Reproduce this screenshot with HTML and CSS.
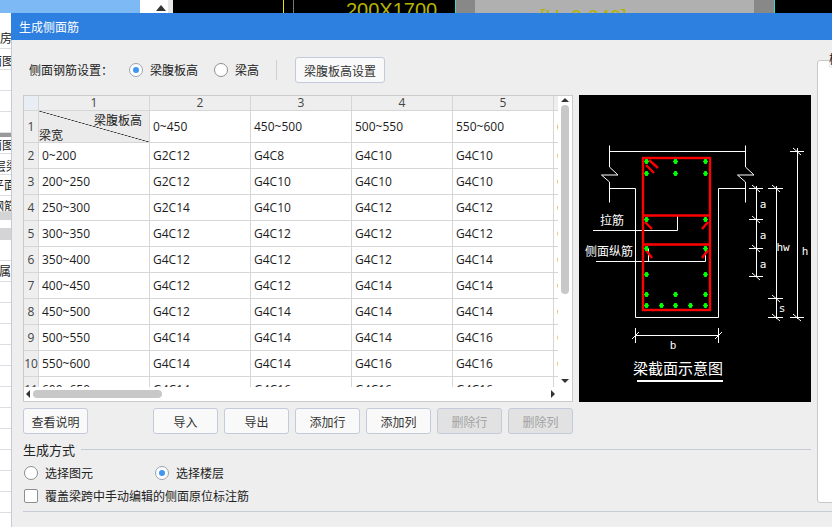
FILE: index.html
```html
<!DOCTYPE html>
<html lang="zh">
<head>
<meta charset="utf-8">
<title>生成侧面筋</title>
<link rel="stylesheet" href="styles.css">
</head>
<body>
<div class="app">
  <aside class="sidebar">
    <div class="side-top"><div class="side-tab"></div><div class="side-arrow"></div></div>
    <div class="side-row h15"></div>
    <div class="side-row">机房</div>
    <div class="side-row low ind10">面图</div>
    <div class="side-row"></div>
    <div class="side-row"></div>
    <div class="side-row"></div>
    <div class="side-band"></div>
    <div class="side-row h17 ind10">面图</div>
    <div class="side-row low ind6">层梁</div>
    <div class="side-row ind8">平面</div>
    <div class="side-row h16 ind8">钢筋</div>
    <div class="side-grey h8"></div>
    <div class="side-row h8"></div>
    <div class="side-grey h12"></div>
    <div class="side-row">&nbsp;</div>
    <div class="side-row ind1">属性</div>
    <div class="side-row"></div>
    <div class="side-row"></div>
    <div class="side-row"></div>
    <div class="side-row"></div>
    <div class="side-row"></div>
    <div class="side-row"></div>
    <div class="side-row"></div>
    <div class="side-row"></div>
    <div class="side-row"></div>
    <div class="side-row"></div>
    <div class="side-row"></div>
  </aside>
  <div class="side-gap"></div>
  <main class="cad">
    <svg class="cad-svg" width="659" height="14" viewBox="173 0 659 14">
      <line x1="283.5" y1="0" x2="283.5" y2="14" stroke="#e6e600"/>
      <line x1="293.5" y1="0" x2="293.5" y2="14" stroke="#777"/>
      <text x="346" y="17" class="cad-label">200X1700</text>
      <rect x="455" y="0" width="320" height="14" fill="#888"/>
      <rect x="475" y="0" width="279" height="14" fill="#b0b0b0"/>
      <rect x="455" y="0" width="1" height="14" fill="#35d6d6"/>
      <rect x="774" y="0" width="1" height="14" fill="#35d6d6"/>
      <text x="540" y="24" class="cad-label">[H: 0.040]</text>
    </svg>
  </main>

  <section class="dialog">
    <header class="dialog-title">生成侧面筋</header>
    <div class="dialog-body">
      <div class="settings">
        <span class="settings-label">侧面钢筋设置<span class="colon">：</span></span>
        <label class="option opt-web"><span class="radio checked"></span>梁腹板高</label>
        <label class="option"><span class="radio"></span>梁高</label>
        <span class="vsep"></span>
        <button class="btn btn-wide">梁腹板高设置</button>
      </div>

      <div class="main-row">
        <div class="grid-box">
          <div class="grid-view">
            <table class="grid">
              <colgroup>
                <col class="c-num"><col class="c-first"><col class="c-std"><col class="c-std"><col class="c-std"><col class="c-std"><col class="c-std">
              </colgroup>
              <thead>
                <tr><th class="corner"></th><th>1</th><th>2</th><th>3</th><th>4</th><th>5</th><th>6</th></tr>
              </thead>
              <tbody>
                <tr class="row-top"><th>1</th>
                  <td class="diag"><div class="diag-in"><span class="diag-a">梁腹板高</span><span class="diag-b">梁宽</span></div></td>
                  <td>0~450</td><td>450~500</td><td>500~550</td><td>550~600</td><td>600~650</td></tr>
                <tr><th>2</th><td>0~200</td><td>G2C12</td><td>G4C8</td><td>G4C10</td><td>G4C10</td><td>G4C10</td></tr>
                <tr><th>3</th><td>200~250</td><td>G2C12</td><td>G4C10</td><td>G4C10</td><td>G4C10</td><td>G4C10</td></tr>
                <tr><th>4</th><td>250~300</td><td>G2C14</td><td>G4C10</td><td>G4C12</td><td>G4C12</td><td>G4C12</td></tr>
                <tr><th>5</th><td>300~350</td><td>G4C12</td><td>G4C12</td><td>G4C12</td><td>G4C12</td><td>G4C12</td></tr>
                <tr><th>6</th><td>350~400</td><td>G4C12</td><td>G4C12</td><td>G4C12</td><td>G4C14</td><td>G4C14</td></tr>
                <tr><th>7</th><td>400~450</td><td>G4C12</td><td>G4C12</td><td>G4C14</td><td>G4C14</td><td>G4C14</td></tr>
                <tr><th>8</th><td>450~500</td><td>G4C12</td><td>G4C14</td><td>G4C14</td><td>G4C14</td><td>G4C14</td></tr>
                <tr><th>9</th><td>500~550</td><td>G4C14</td><td>G4C14</td><td>G4C14</td><td>G4C16</td><td>G4C16</td></tr>
                <tr><th>10</th><td>550~600</td><td>G4C14</td><td>G4C14</td><td>G4C16</td><td>G4C16</td><td>G4C16</td></tr>
                <tr><th>11</th><td>600~650</td><td>G4C14</td><td>G4C16</td><td>G4C16</td><td>G4C16</td><td>G4C16</td></tr>
              </tbody>
            </table>
          </div>
          <div class="vbar"><span class="arr arr-up"></span><span class="vthumb"></span><span class="arr arr-down"></span></div>
          <div class="hbar"><span class="arr arr-left"></span><span class="hthumb"></span><span class="arr arr-right"></span></div>
        </div>

        <figure class="section-fig">
          <svg width="232" height="307" viewBox="0 0 232 307">
            <defs>
              <path id="dot" d="M-2.5 0H2.5M0 -2.5V2.5M-1.5 -1.5H1.5M-1.5 1.5H1.5"/>
            </defs>
            <g class="w">
              <path d="M30.5 50.5V72L39 80H22.5L30.5 87V107.5"/>
              <path d="M166.5 50.5V72L175 80H158.5L166.5 87V107.5"/>
              <path d="M30.5 56.5H166.5"/>
              <path d="M30.5 93.5H56.5V222.5H139.5V93.5H166.5"/>
              <path d="M14 135.5H98.5V121"/>
              <path d="M17 166.5H126.5V154M69.5 166.5V154"/>
              <path d="M177.5 91V182"/>
              <path d="M170 93.5H184M170 124.5H184M170 153.5H184M170 181.5H184"/>
              <path d="M197.5 91V224"/>
              <path d="M189 93.5H204M189 203.5H204M189 222.5H204"/>
              <path d="M218.5 53V224"/>
              <path d="M211 56.5H225M211 222.5H225"/>
              <path d="M56.5 240.5H139.5M56.5 233V248M139.5 233V248"/>
              <path d="M173 90L181 97M173 121L181 128M173 150L181 157M173 178L181 185M193 90L201 97M193 200L201 207M193 219L201 226M214 53L222 60M214 219L222 226M53 244L60 237M136 244L143 237"/>
            </g>
            <g class="r">
              <rect x="64" y="63" width="67" height="152"/>
              <path d="M64 120.5H131M64 149.5H131"/>
              <path d="M70 65L79 73M67 70L75 78M66 127L73 134M129 127L123 134M67 155L73 163M129 155L123 163"/>
            </g>
            <g class="g">
              <use href="#dot" x="67.5" y="66.5"/><use href="#dot" x="96.5" y="66.5"/><use href="#dot" x="126.5" y="66.5"/>
              <use href="#dot" x="67.5" y="78.5"/><use href="#dot" x="96.5" y="78.5"/><use href="#dot" x="126.5" y="78.5"/>
              <use href="#dot" x="67.5" y="124.5"/><use href="#dot" x="126.5" y="124.5"/>
              <use href="#dot" x="67.5" y="153.5"/><use href="#dot" x="126.5" y="153.5"/>
              <use href="#dot" x="67.5" y="179.5"/><use href="#dot" x="126.5" y="179.5"/>
              <use href="#dot" x="67.5" y="199.5"/><use href="#dot" x="96.5" y="199.5"/><use href="#dot" x="126.5" y="199.5"/>
              <use href="#dot" x="67.5" y="210.5"/><use href="#dot" x="82.5" y="210.5"/><use href="#dot" x="96.5" y="210.5"/><use href="#dot" x="111.5" y="210.5"/><use href="#dot" x="126.5" y="210.5"/>
            </g>
            <text x="21" y="130" class="t12">拉筋</text>
            <text x="6" y="161" class="t12">侧面纵筋</text>
            <text x="184" y="113" class="t10 mid">a</text>
            <text x="184" y="144" class="t10 mid">a</text>
            <text x="184" y="173" class="t10 mid">a</text>
            <text x="204" y="156" class="t10 mid">hw</text>
            <text x="226" y="160" class="t10 mid">h</text>
            <text x="203" y="217" class="t10 mid">s</text>
            <text x="94" y="254" class="t10 mid">b</text>
            <text x="54" y="279" class="t15">梁截面示意图</text>
            <path class="ul" d="M58 286H144"/>
          </svg>
        </figure>
      </div>

      <div class="actions">
        <button class="btn">查看说明</button>
        <div class="actions-right">
          <button class="btn">导入</button>
          <button class="btn">导出</button>
          <button class="btn">添加行</button>
          <button class="btn">添加列</button>
          <button class="btn disabled">删除行</button>
          <button class="btn disabled">删除列</button>
        </div>
      </div>

      <div class="group-head"><span>生成方式</span><i></i></div>
      <div class="mode-row">
        <label class="option mode-a"><span class="radio"></span>选择图元</label>
        <label class="option"><span class="radio checked"></span>选择楼层</label>
      </div>
      <label class="option check-row"><span class="check"></span>覆盖梁跨中手动编辑的侧面原位标注筋</label>
      <div class="bottom-line"></div>
    </div>
    <div class="side-panel"><span class="legend">楼层</span></div>
  </section>
</div>
</body>
</html>
```

FILE: styles.css
```css
* { box-sizing: border-box; }
html, body { margin: 0; padding: 0; }
body {
  width: 832px; height: 527px; overflow: hidden; background: #fff;
  font: 12px/16px "Open Sans", "Noto Sans CJK SC", sans-serif; color: #222;
}
.app { position: relative; width: 832px; height: 527px; display: flex; overflow: hidden; }

/* backdrop */
.sidebar { width: 168px; background: #fff; font-family: "Noto Sans CJK SC", sans-serif; font-size: 12px; }
.side-top { display: flex; height: 13px; }
.side-tab { width: 140px; background: #7db9f4; }
.side-arrow { width: 0; height: 0; margin: 5px 0 0 16px; border: 5px solid transparent; border-top: 0; border-bottom: 6px solid #333; }
.side-row { height: 21px; border-bottom: 1px solid #ddd; line-height: 20px; text-indent: -12px; overflow: hidden; }
.side-row.low { line-height: 24px; }
.side-row.ind1 { text-indent: -1px; }
.side-row.ind6 { text-indent: -6px; }
.side-row.ind8 { text-indent: -8px; }
.side-row.ind10 { text-indent: -10px; }
.side-row.h15 { height: 15px; border: 0; }
.side-row.h17 { height: 17px; line-height: 16px; }
.side-row.h16 { height: 16px; }
.side-row.h8 { height: 8px; border: 0; }
.side-band { height: 4px; background: #9a9a9a; }
.side-grey { background: #d4d4d4; }
.side-grey.h8 { height: 8px; }
.side-grey.h12 { height: 12px; }
.side-gap { width: 5px; background: #e8e8e8; }
.cad { flex: 1; background: #000; }
.cad-svg { display: block; }
.cad-label { font: 20px "Liberation Sans", sans-serif; fill: #b4b400; }

/* dialog */
.dialog {
  position: absolute; left: 11px; top: 13px; right: 0; bottom: 0;
  background: #eee; border-left: 1px solid #c4cbd6;
}
.dialog-title {
  height: 27px; margin-left: -1px; background: #2d7fe0; color: #fff;
  padding-left: 8px; line-height: 27px; font-family: "Noto Sans CJK SC", sans-serif;
}
.dialog-body { padding: 17px 0 0 11px; font-family: "Noto Sans CJK SC", sans-serif; }

.settings { display: flex; align-items: center; height: 26px; padding-left: 6px; }
.settings-label { width: 100px; }
.colon { font-family: "Noto Sans CJK TC", sans-serif; }
.option { display: flex; align-items: center; }
.opt-web { width: 85px; }
.radio {
  width: 14px; height: 14px; border-radius: 50%; background: #fff; border: 1px solid #8f8f8f;
  margin-right: 7px; display: flex; align-items: center; justify-content: center;
}
.radio.checked { background: #fff; border-color: #9aa3ad; }
.radio.checked::after { content: ""; width: 6px; height: 6px; border-radius: 50%; background: #3f95f2; }
.vsep { width: 1px; height: 20px; background: #cfcfcf; margin: 0 18px 0 17px; }

.btn {
  width: 65px; height: 26px; padding: 0; background: #f9f9f9; color: #333;
  border: 1px solid #c3cbda; border-radius: 3px;
  font: 12px "Noto Sans CJK SC", sans-serif;
}
.btn-wide { width: 90px; }
.btn.disabled { background: #e2e2e2; color: #a3a3a3; }

.main-row { display: flex; gap: 6px; margin-top: 12px; }
.grid-box {
  position: relative; width: 550px; height: 307px; background: #fff;
  border: 1px solid #cacaca;
}
.grid-view { width: 534px; height: 291px; overflow: hidden; }
.grid {
  width: 616px; table-layout: fixed; border-collapse: separate; border-spacing: 0;
  font-family: "Open Sans", "Noto Sans CJK SC", sans-serif;
}
.c-num { width: 15px; }
.c-first { width: 111px; }
.c-std { width: 101px; }
.grid th, .grid td {
  border-right: 1px solid #d6d6d6; border-bottom: 1px solid #d6d6d6;
  height: 26px; padding: 0; font-weight: 400; white-space: nowrap; overflow: hidden;
}
.grid td { padding-left: 3px; background: #fff; color: #1c1c1c; }
.grid tbody th { background: #eee; text-align: center; color: #444; font-size: 12px; padding: 0; }
.grid thead th { height: 15px; background: #eee; color: #444; text-align: center; line-height: 14px; }
.grid thead .corner { background: #e9eef4; }
.grid .row-top td, .grid .row-top th { height: 32px; }
.grid td.diag {
  padding: 0;
  background: linear-gradient(to top right, #ebebeb calc(50% - .6px), #222 50%, #ebebeb calc(50% + .6px));
}
.diag-in { display: flex; flex-direction: column; height: 31px; font-family: "Noto Sans CJK SC", sans-serif; line-height: 14px; }
.diag-a { align-self: flex-end; margin: 2px 7px 0 0; }
.diag-b { margin: 1px 0 0 0; }

.vbar { position: absolute; right: 0; top: 0; width: 14px; height: 291px; }
.vthumb { position: absolute; left: 3px; top: 9px; width: 8px; height: 189px; background: #c8c8c8; border-radius: 4px; }
.hbar { position: absolute; left: 0; top: 291px; width: 534px; height: 14px; }
.hthumb { position: absolute; left: 9px; top: 3px; width: 129px; height: 8px; background: #c8c8c8; border-radius: 4px; }
.arr { position: absolute; width: 0; height: 0; border: 4px solid transparent; }
.arr-up { left: 3px; top: 2px; border-top: 0; border-bottom: 4px solid #333; }
.arr-down { left: 3px; top: 283px; border-bottom: 0; border-top: 4px solid #333; }
.arr-left { left: 2px; top: 3px; border-left: 0; border-right: 4px solid #333; }
.arr-right { left: 527px; top: 3px; border-right: 0; border-left: 4px solid #333; }

.section-fig { margin: 0; width: 232px; height: 307px; background: #000; }
.section-fig svg { display: block; }
.w path { fill: none; stroke: #fff; stroke-width: 1; }
.r rect, .r path { fill: none; stroke: #f00; stroke-width: 2.4; }
.g use { fill: none; stroke: #0f0; stroke-width: 1.5; }
.t12 { font: 12px "Noto Sans CJK SC", sans-serif; fill: #fff; }
.t10 { font: 11px "DejaVu Sans Mono", monospace; fill: #fff; }
.mid { text-anchor: middle; }
.t15 { font: 15px "Noto Sans CJK SC", sans-serif; fill: #fff; }
.ul { fill: none; stroke: #fff; stroke-width: 2; }

.actions { display: flex; justify-content: space-between; width: 550px; margin-top: 6px; }
.actions-right { display: flex; gap: 6px; }

.group-head { display: flex; align-items: center; width: 788px; height: 16px; margin-top: 8px; font-size: 13px; }
.group-head i { flex: 1; height: 1px; background: #c4cbd6; margin: -2px 0 0 6px; }
.mode-row { display: flex; align-items: center; height: 18px; margin: 6px 0 0 1px; }
.mode-a { width: 131px; }
.check-row { height: 18px; margin: 5px 0 0 1px; }
.check { width: 14px; height: 14px; border: 1px solid #8f8f8f; border-radius: 2px; background: #fff; margin-right: 7px; }
.bottom-line { height: 1px; background: #c4cbd6; margin-top: 6px; }

.side-panel {
  position: absolute; left: 805px; top: 47px; width: 40px; height: 443px;
  background: #fff; border: 1px solid #c8c8c8; border-radius: 3px;
}
.legend {
  position: absolute; left: 11px; top: -9px; background: #eee; padding-left: 0;
  line-height: 16px; white-space: nowrap; color: #222;
}
```
